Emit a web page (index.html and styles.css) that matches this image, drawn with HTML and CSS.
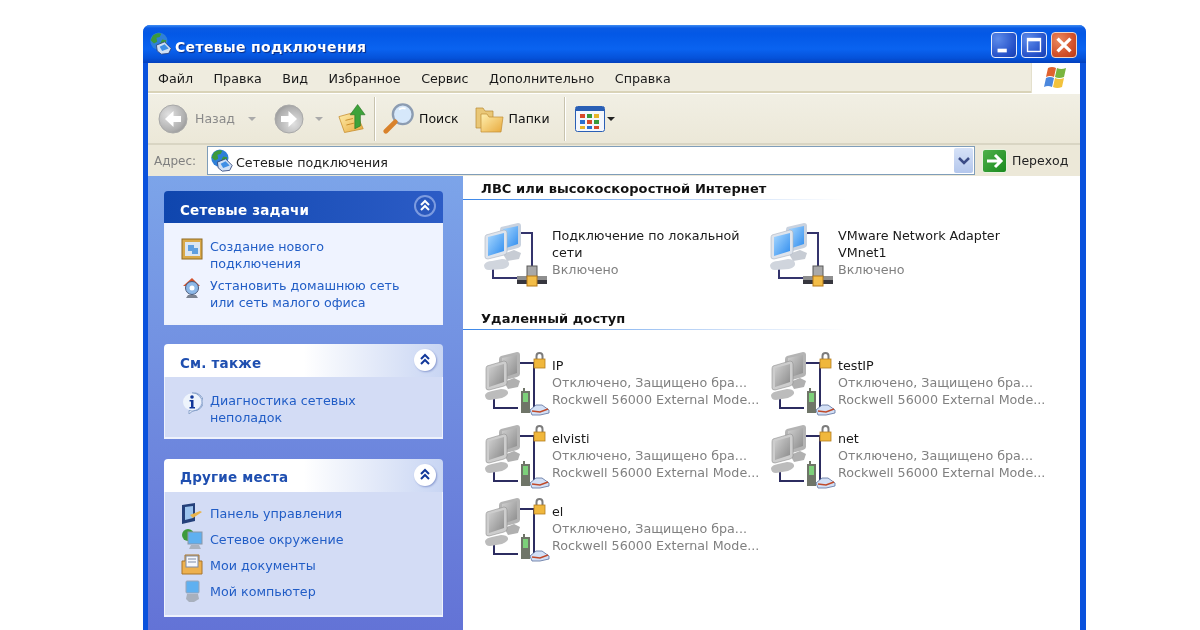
FILE: index.html
```html
<!DOCTYPE html>
<html lang="ru">
<head>
<meta charset="utf-8">
<title>Сетевые подключения</title>
<link rel="stylesheet" href="styles.css">
</head>
<body>
<svg class="defs" width="0" height="0" aria-hidden="true">
  <defs>
    <linearGradient id="scr" x1="0" y1="0" x2="1" y2="1"><stop offset="0" stop-color="#a8d8ff"/><stop offset="1" stop-color="#2f8cee"/></linearGradient>
    <linearGradient id="grayscr" x1="0" y1="0" x2="1" y2="1"><stop offset="0" stop-color="#d0d0d0"/><stop offset="1" stop-color="#8a8a8a"/></linearGradient>
    <radialGradient id="ball" cx=".35" cy=".35" r=".8"><stop offset="0" stop-color="#e2e2e2"/><stop offset=".7" stop-color="#b0b0b0"/><stop offset="1" stop-color="#8e8e8e"/></radialGradient>
    <linearGradient id="fold" x1="0" y1="0" x2="1" y2="1"><stop offset="0" stop-color="#fff0b0"/><stop offset="1" stop-color="#e8a93c"/></linearGradient>

    <symbol id="i-globe" viewBox="0 0 28 28">
      <circle cx="12" cy="11" r="10.500" fill="#2f7fd8"/>
      <path d="M5 4c4-3 8-3 10-2l-2 4-4 1 1 5-4 2-4-4zM16 9l5 1-1 5-4 2-2-4z" fill="#3c9a3c"/>
      <path d="M9 16l10-4 8 8-3 6-9 1-5-4z" fill="#cfe0f5" stroke="#2b3f77"/>
      <path d="M13 18l6-3 5 5-8 3z" fill="#3f8fe5"/>
    </symbol>
    <symbol id="i-lan" viewBox="0 0 64 64">
      <path d="M37 10H49V44M10 40V55H34" fill="none" stroke="#34346c" stroke-width="2"/>
      <path d="M18 4 35 0q3 0 3 3V22q0 2-3 3L20 29q-3 0-3-2V7q0-2 1-3z" fill="#c9d2df"/>
      <path d="M20 6 35 3V21L20 26z" fill="url(#scr)"/>
      <path d="M20 31 31 27 38 30 36 36 24 38z" fill="#c7ccd4"/>
      <path d="M3 12 21 7q3 0 3 3V29q0 2-3 3L5 36q-3 0-3-2V15q0-2 1-3z" fill="#dfe4ec" stroke="#a9b1bf" stroke-width=".6"/>
      <path d="M5 14 21 10V28L5 33z" fill="url(#scr)"/>
      <path d="M1 42q2-4 8-4l10-2q6 0 7 4t-6 6L6 47q-5 0-5-5z" fill="#d0d5dd"/>
      <rect x="34" y="53" width="30" height="8" fill="#8f8f8f"/>
      <rect x="34" y="57" width="30" height="4" fill="#36363e"/>
      <rect x="44" y="43" width="10" height="11" fill="#a9a9a9" stroke="#5a5a5a"/>
      <rect x="44" y="53" width="10" height="10" fill="#f3bd48" stroke="#b57a1a"/>
    </symbol>
    <symbol id="i-dial" viewBox="0 0 68 66">
      <path d="M35 12H50V56M10 42V57H34" fill="none" stroke="#2c2c60" stroke-width="2"/>
      <path d="M52.500 8V5a3 3 0 0 1 6 0V8" fill="none" stroke="#7c7c7c" stroke-width="2"/>
      <rect x="50" y="8" width="11" height="9" fill="#f0b73c" stroke="#b57e20" stroke-width=".8"/>
      <path d="M17 5 33 1q3 0 3 3V23q0 2-3 3L18 30q-3 0-3-2V8q0-2 2-3z" fill="#b4b4b4"/>
      <path d="M18 7 33 4V22L18 27z" fill="url(#grayscr)"/>
      <path d="M20 31 30 27 36 30 34 36 24 38z" fill="#b0b0b0"/>
      <path d="M3 15 20 10q3 0 3 3V32q0 2-3 3L5 39q-3 0-3-2V18q0-2 1-3z" fill="#cdcdcd" stroke="#8f8f8f" stroke-width=".6"/>
      <path d="M5 17 20 13V31L5 36z" fill="url(#grayscr)"/>
      <path d="M1 44q1-3 7-4l9-2q6 0 7 3t-6 6L6 49q-5 0-5-5z" fill="#bcbcbc"/>
      <path d="M39 37h2v3h5V62H37V40h2z" fill="#6f7568"/>
      <rect x="39" y="42" width="5" height="9" fill="#7dd07a"/>
      <path d="M46 59l6-5h6l7 5v3l-9 2H48z" fill="#d3e0f6" stroke="#5a6f9c" stroke-width=".8"/>
      <path d="M48 60l8 1 8-3" stroke="#c04a2a" stroke-width="1.500" fill="none"/>
    </symbol>
    <symbol id="i-circle" viewBox="0 0 30 30">
      <circle cx="15" cy="15" r="14" fill="url(#ball)" stroke="#a9a9a9"/>
      <path d="M23 12H15.500V7L7 15l8.500 8V18H23z" fill="#fff"/>
    </symbol>
    <symbol id="i-chev" viewBox="0 0 22 22">
      <path d="M7 10l4-4 4 4M7 15l4-4 4 4" fill="none" stroke="currentColor" stroke-width="2"/>
    </symbol>
  </defs>
</svg>

<div class="window">
  <header class="titlebar">
    <svg class="title-icon" width="23" height="23"><use href="#i-globe"/></svg>
    <span class="title-text">Сетевые подключения</span>
    <div class="controls">
      <span class="ctl ctl-blue"><svg width="24" height="24" viewBox="0 0 26 26"><rect x="6" y="17" width="10" height="4" fill="#fff"/></svg></span>
      <span class="ctl ctl-blue"><svg width="24" height="24" viewBox="0 0 26 26"><rect x="6" y="6" width="14" height="14" fill="none" stroke="#fff" stroke-width="1.500"/><rect x="6" y="6" width="14" height="3" fill="#fff"/></svg></span>
      <span class="ctl ctl-red"><svg width="24" height="24" viewBox="0 0 26 26"><path d="M6 6 20 20M20 6 6 20" stroke="#fff" stroke-width="3.500"/></svg></span>
    </div>
  </header>

  <nav class="menubar">
    <div class="menu-items">
      <span>Файл</span><span>Правка</span><span>Вид</span><span>Избранное</span><span>Сервис</span><span>Дополнительно</span><span>Справка</span>
    </div>
    <div class="flag">
      <svg width="26" height="26" viewBox="0 0 26 26">
        <path d="M5 3q4-2 8 0l-2 9q-4-2-8 0z" fill="#e0622e"/>
        <path d="M14 3q4 2 9 0l-2 9q-5 2-9 0z" fill="#79b53e"/>
        <path d="M3 13q4-2 8 0l-2 9q-4-2-8 0z" fill="#4b87dd"/>
        <path d="M12 13q4 2 9 0l-2 9q-5 2-9 0z" fill="#f2c23c"/>
      </svg>
    </div>
  </nav>

  <div class="toolbar">
    <svg class="tb-back" width="30" height="30"><use href="#i-circle"/></svg>
    <span class="tb-label tb-muted">Назад</span>
    <span class="caret caret-gray tb-c1"></span>
    <svg class="tb-fwd" width="30" height="30"><use href="#i-circle" transform="rotate(180 15 15)"/></svg>
    <span class="caret caret-gray tb-c2"></span>
    <svg class="tb-up" width="28" height="31" viewBox="0 0 30 32">
      <path d="M1 14 19 9 27 27 7 31z" fill="url(#fold)" stroke="#c58a28" stroke-width=".8"/>
      <path d="M8 18l8-2M9 23l8-2" stroke="#c58a28"/>
      <path d="M18 27V12H13L21 1l8 11H24V24z" fill="#3ea33a" stroke="#1f6d1f" stroke-width=".6"/>
    </svg>
    <span class="tb-sep"></span>
    <svg class="tb-search" width="32" height="34" viewBox="0 0 34 36">
      <circle cx="21" cy="13" r="10.500" fill="#d6e8fb" stroke="#8c9cb2" stroke-width="2.500"/>
      <path d="M17 8a7 7 0 0 1 7-1" stroke="#fff" stroke-width="2" fill="none"/>
      <path d="M13 21 3 31" stroke="#d9822b" stroke-width="5" stroke-linecap="round"/>
    </svg>
    <span class="tb-label tb-dark">Поиск</span>
    <svg class="tb-fold" width="30" height="30" viewBox="0 0 30 30">
      <path d="M1 4H8l2 3H18V24H1z" fill="#e9c777" stroke="#b98a30" stroke-width=".7"/>
      <path d="M6 10H12l2 3H28L26 28H6z" fill="url(#fold)" stroke="#c08d34" stroke-width=".7"/>
    </svg>
    <span class="tb-label tb-dark">Папки</span>
    <span class="tb-sep tb-sep2"></span>
    <svg class="tb-view" width="30" height="26" viewBox="0 0 30 26">
      <rect x=".5" y=".5" width="29" height="25" rx="2" fill="#f4f7fd" stroke="#2a5fb5"/>
      <rect x="1" y="1" width="28" height="4" fill="#2a5fb5"/>
      <rect x="5" y="8" width="5" height="4" fill="#d94a2a"/><rect x="12" y="8" width="5" height="4" fill="#3a9a3a"/><rect x="19" y="8" width="5" height="4" fill="#e7b52c"/>
      <rect x="5" y="14" width="5" height="4" fill="#2a6fd0"/><rect x="12" y="14" width="5" height="4" fill="#d94a2a"/><rect x="19" y="14" width="5" height="4" fill="#3a9a3a"/>
      <rect x="5" y="20" width="5" height="3" fill="#e7b52c"/><rect x="12" y="20" width="5" height="3" fill="#2a6fd0"/><rect x="19" y="20" width="5" height="3" fill="#d94a2a"/>
    </svg>
    <span class="caret caret-dark tb-c3"></span>
  </div>

  <div class="addressbar">
    <span class="addr-label">Адрес:</span>
    <div class="addr-field">
      <svg class="addr-icon" width="23" height="23"><use href="#i-globe"/></svg>
      <span class="addr-text">Сетевые подключения</span>
      <span class="addr-drop"><svg width="14" height="10" viewBox="0 0 14 10"><path d="M2 2l5 5 5-5" fill="none" stroke="#3b4c86" stroke-width="2.500"/></svg></span>
    </div>
    <span class="go-btn"><svg width="20" height="16" viewBox="0 0 20 16"><path d="M2 8H16M10 2l6 6-6 6" fill="none" stroke="#fff" stroke-width="3"/></svg></span>
    <span class="go-text">Переход</span>
  </div>

  <div class="content">
    <aside class="sidebar">
      <section class="card card-main">
        <div class="card-head">
          <span class="card-title">Сетевые задачи</span>
          <svg class="chev" width="22" height="22"><use href="#i-chev"/></svg>
        </div>
        <div class="card-body">
          <a class="task">
            <svg class="task-icon" width="22" height="22" viewBox="0 0 22 22"><rect x="1" y="1" width="20" height="20" fill="#d9a94a" stroke="#8f6a23"/><rect x="4" y="4" width="15" height="14" fill="#dbe6f3"/><path d="M7 7h6v6H7zM11 10h6v6h-6z" fill="#5f9fe0"/></svg>
            <span>Создание нового подключения</span>
          </a>
          <a class="task">
            <svg class="task-icon" width="22" height="22" viewBox="0 0 22 22"><path d="M2 9 11 1l8 8z" fill="#d3522d"/><circle cx="11" cy="11" r="6.500" fill="#8db8e8" stroke="#4a5a7a"/><circle cx="11" cy="11" r="2.500" fill="#fff"/><path d="M7 18h8l2 3H5z" fill="#7b8290"/></svg>
            <span>Установить домашнюю сеть или сеть малого офиса</span>
          </a>
        </div>
      </section>

      <section class="card">
        <div class="card-head">
          <span class="card-title">См. также</span>
          <svg class="chev" width="22" height="22"><use href="#i-chev"/></svg>
        </div>
        <div class="card-body">
          <a class="task">
            <svg class="task-icon" width="22" height="22" viewBox="0 0 22 22"><path d="M11 1a10 9 0 1 1-3 17.500L8 22l4-3.200A9.500 9 0 1 0 11 1z" fill="#eef4fc" stroke="#8aa4cc"/><ellipse cx="11" cy="10" rx="9" ry="8.500" fill="#eef4fc"/><circle cx="11" cy="5" r="1.800" fill="#12389a"/><path d="M8.500 8h4v7h1.500v1.500H8.500V15H10V9.500H8.500z" fill="#12389a"/></svg>
            <span>Диагностика сетевых неполадок</span>
          </a>
        </div>
      </section>

      <section class="card">
        <div class="card-head">
          <span class="card-title">Другие места</span>
          <svg class="chev" width="22" height="22"><use href="#i-chev"/></svg>
        </div>
        <div class="card-body card-body-list">
          <a class="place">
            <svg class="task-icon" width="22" height="22" viewBox="0 0 22 22"><path d="M1 3 14 1V19L1 22z" fill="#24407a"/><path d="M4 5 12 4V16L4 18z" fill="#9cc4ee"/><path d="M9 13l10-4 2 1-9 6z" fill="#e9b44c"/></svg>
            <span>Панель управления</span>
          </a>
          <a class="place">
            <svg class="task-icon" width="22" height="22" viewBox="0 0 22 22"><circle cx="7" cy="7" r="6" fill="#3c9a3c"/><rect x="7" y="4" width="14" height="12" fill="#5fb0f0" stroke="#8c97a8"/><path d="M10 17h8l2 4H8z" fill="#aab2bf"/></svg>
            <span>Сетевое окружение</span>
          </a>
          <a class="place">
            <svg class="task-icon" width="22" height="22" viewBox="0 0 22 22"><path d="M1 7H4V1H18V7H21V20H1z" fill="#edb14f" stroke="#a9742a"/><rect x="5" y="2" width="12" height="11" fill="#f6f8fc" stroke="#7c8ba8"/><path d="M7 5h8M7 8h8" stroke="#7c8ba8"/></svg>
            <span>Мои документы</span>
          </a>
          <a class="place">
            <svg class="task-icon" width="22" height="22" viewBox="0 0 22 22"><rect x="5" y="1" width="13" height="12" rx="1" fill="#5fb0f0" stroke="#9aa5b8"/><path d="M6 14h11l1 5-5 3H8L5 19z" fill="#a8b0bd"/></svg>
            <span>Мой компьютер</span>
          </a>
        </div>
      </section>
    </aside>

    <main class="listing">
      <h2 class="group-head">ЛВС или высокоскоростной Интернет</h2>
      <div class="group-grid group-lan">
        <div class="conn">
          <svg class="conn-icon" width="64" height="64"><use href="#i-lan"/></svg>
          <div class="conn-text"><span class="conn-name">Подключение по локальной сети</span><span class="conn-sub">Включено</span></div>
        </div>
        <div class="conn">
          <svg class="conn-icon" width="64" height="64"><use href="#i-lan"/></svg>
          <div class="conn-text"><span class="conn-name">VMware Network Adapter VMnet1</span><span class="conn-sub">Включено</span></div>
        </div>
      </div>
      <h2 class="group-head">Удаленный доступ</h2>
      <div class="group-grid group-dial">
        <div class="conn">
          <svg class="conn-icon" width="68" height="66"><use href="#i-dial"/></svg>
          <div class="conn-text"><span class="conn-name">IP</span><span class="conn-sub">Отключено, Защищено бра...</span><span class="conn-sub">Rockwell 56000 External Mode...</span></div>
        </div>
        <div class="conn">
          <svg class="conn-icon" width="68" height="66"><use href="#i-dial"/></svg>
          <div class="conn-text"><span class="conn-name">testIP</span><span class="conn-sub">Отключено, Защищено бра...</span><span class="conn-sub">Rockwell 56000 External Mode...</span></div>
        </div>
        <div class="conn">
          <svg class="conn-icon" width="68" height="66"><use href="#i-dial"/></svg>
          <div class="conn-text"><span class="conn-name">elvisti</span><span class="conn-sub">Отключено, Защищено бра...</span><span class="conn-sub">Rockwell 56000 External Mode...</span></div>
        </div>
        <div class="conn">
          <svg class="conn-icon" width="68" height="66"><use href="#i-dial"/></svg>
          <div class="conn-text"><span class="conn-name">net</span><span class="conn-sub">Отключено, Защищено бра...</span><span class="conn-sub">Rockwell 56000 External Mode...</span></div>
        </div>
        <div class="conn">
          <svg class="conn-icon" width="68" height="66"><use href="#i-dial"/></svg>
          <div class="conn-text"><span class="conn-name">el</span><span class="conn-sub">Отключено, Защищено бра...</span><span class="conn-sub">Rockwell 56000 External Mode...</span></div>
        </div>
      </div>
    </main>
  </div>
</div>
</body>
</html>
```
FILE: styles.css
```css
* { box-sizing: border-box; }
html, body { margin: 0; height: 630px; overflow: hidden; background: #fff; }
body { font-family: "DejaVu Sans", Verdana, sans-serif; font-size: 12.7px; color: #1a1a1a; }
.defs { display: block; height: 0; }

.window {
  margin: 25px 0 0 143px;
  width: 943px;
  height: 605px;
  display: flex;
  flex-direction: column;
  background: #0a52dd;
  border-radius: 7px 7px 0 0;
  padding: 0 6px 0 5px;
  filter: blur(0.35px);
}

.titlebar {
  height: 38px;
  flex: none;
  margin: 0 -6px 0 -5px;
  padding: 0 9px 0 6px;
  display: flex;
  align-items: center;
  border-radius: 7px 7px 0 0;
  background: linear-gradient(#3f8df3 0, #0a5be4 3px, #0358e6 9px, #0a63f0 24px, #0552da 33px, #0340bd 38px);
}
.title-icon { flex: none; margin-top: -1px; }
.title-text {
  margin: 6px 0 0 3px;
  color: #fff;
  font-weight: 700;
  font-size: 14px;
  letter-spacing: .35px;
  text-shadow: 1px 1px 1px #0a2a80;
}
.controls { margin-left: auto; display: flex; gap: 4px; margin-top: 1px; }
.ctl { width: 26px; height: 26px; border: 1px solid #e8eefc; border-radius: 4px; display: flex; }
.ctl-blue { background: radial-gradient(circle at 25% 25%, #5d8bea, #2450c8 70%, #1b3fae); }
.ctl-red { background: radial-gradient(circle at 30% 30%, #e98a60, #d3512a 60%, #b93a18); border-color: #f0d6c8; }

.menubar {
  height: 30px;
  display: flex;
  background: #efecdf;
  border-bottom: 2px solid #d9d3b8;
  flex: none;
}
.menu-items { display: flex; gap: 20.500px; padding: 2px 0 0 10px; align-items: center; flex: 1; }
.flag { width: 49px; background: #fff; display: flex; align-items: center; justify-content: center; border-left: 1px solid #e4e0cc; margin-bottom: -2px; }

.toolbar {
  height: 52px;
  flex: none;
  display: flex;
  align-items: center;
  background: linear-gradient(#f1efe4, #ece8d8);
  border-top: 1px solid #fff;
  border-bottom: 2px solid #d9d5c3;
  padding-left: 10px;
}
.tb-label { font-size: 12.500px; }
.tb-muted { color: #8a8a8a; margin-left: 7px; }
.tb-dark { color: #111; }
.caret { width: 0; height: 0; border-left: 4px solid transparent; border-right: 4px solid transparent; border-top: 4px solid #aaa; }
.caret-dark { border-top-color: #222; }
.tb-c1 { margin-left: 13px; }
.tb-fwd { margin-left: 18px; }
.tb-c2 { margin-left: 11px; }
.tb-up { margin-left: 15px; }
.tb-sep { width: 1px; height: 44px; background: #c8c3ae; margin-left: 8px; box-shadow: 1px 0 0 #fff; }
.tb-search { margin-left: 8px; margin-right: 4px; }
.tb-fold { margin-left: 16px; margin-right: 4px; }
.tb-sep2 { margin-left: 14px; }
.tb-view { margin-left: 10px; }
.tb-c3 { margin-left: 2px; }

.addressbar {
  height: 31px;
  flex: none;
  display: flex;
  align-items: center;
  background: #ece8d8;
  padding-left: 6px;
}
.addr-label { color: #7f7f7f; font-size: 12px; width: 53px; }
.addr-field {
  width: 768px;
  height: 29px;
  border: 1px solid #7f9db9;
  background: #fff;
  display: flex;
  align-items: center;
  padding-left: 2px;
}
.addr-text { margin: 3px 0 0 3px; color: #222; }
.addr-drop {
  margin-left: auto;
  margin-right: 1px;
  width: 19px;
  height: 25px;
  background: linear-gradient(#d6e2f8, #b4c7ec);
  border-radius: 2px;
  display: flex;
  align-items: center;
  justify-content: center;
}
.go-btn {
  margin-left: 7px;
  width: 25px;
  height: 24px;
  border-radius: 3px;
  border: 1px solid #e8f2e0;
  background: linear-gradient(135deg, #4fb04a, #1a8a1e);
  display: flex;
  align-items: center;
  justify-content: center;
}
.go-text { margin-left: 5px; font-size: 12.500px; color: #222; }

.content { flex: 1; display: flex; min-height: 0; background: #fff; }

.sidebar {
  width: 315px;
  flex: none;
  padding: 15px 0 0 16px;
  display: flex;
  flex-direction: column;
  gap: 19px;
  background: linear-gradient(#7ca4e9, #6373d6);
}
.card { width: 279px; flex: none; }
.card + .card + .card { margin-top: 1px; }
.card-head {
  height: 33px;
  padding: 0 7px 0 16px;
  display: flex;
  align-items: center;
  justify-content: space-between;
  border-radius: 4px 4px 0 0;
  background: linear-gradient(90deg, #fff 0, #fff 50%, #c8d5f3 100%);
}
.card-main .card-head { background: linear-gradient(90deg, #0f46ae, #2c5cc6); height: 32px; }
.card-title { font-weight: 700; font-size: 13.500px; letter-spacing: .2px; color: #1f4fb0; margin-top: 5px; }
.card + .card + .card .card-title { margin-top: 3px; }
.card-main .card-title { color: #fff; }
.chev { flex: none; margin-top: -2px; color: #12389a; background: #fff; border-radius: 50%; box-shadow: 1px 1px 2px #8a9bd0; }
.card-main .chev { color: #fff; background: #2a58bd; box-shadow: inset 0 0 0 2px #7c9be0; }
.card-body {
  padding: 15px 16px 11px;
  display: flex;
  flex-direction: column;
  gap: 5px;
  background: #d3dcf5;
  border: solid #eef2fc;
  border-width: 0 1px 2px 1px;
}
.card-main .card-body { background: #eff3ff; padding-bottom: 12px; }
.card-body-list { padding: 8px 16px 11px; gap: 0; }
.task, .place { display: flex; gap: 7px; color: #215dc6; line-height: 17px; }
.task span { max-width: 200px; }
.place { height: 26px; align-items: center; }
.task-icon { flex: none; }

.listing { flex: 1; min-width: 0; padding: 5px 0 0 18px; }
.group-head {
  margin: 0;
  height: 19px;
  width: 365px;
  font-size: 13px;
  line-height: 16px;
  font-weight: 700;
  letter-spacing: .08px;
  color: #111;
  position: relative;
}
.group-head::after {
  content: "";
  position: absolute;
  left: -18px;
  right: 0;
  bottom: 0;
  height: 1px;
  background: linear-gradient(90deg, #3a86e8, #cfe0f8 70%, #fff);
}
.group-grid { display: grid; grid-template-columns: 286px 286px; }
.group-lan { padding: 23px 0 24px 0; }
.group-dial { grid-auto-rows: 73px; padding-top: 21px; }
.conn { display: flex; gap: 4px; }
.conn-icon { flex: none; margin-left: 3px; }
.group-lan .conn-icon { margin-left: 2px; margin-right: 1px; }
.group-dial .conn { gap: 0; }
.conn-text { display: flex; flex-direction: column; line-height: 17px; width: 212px; padding-top: 6px; }
.group-lan .conn-text { padding-top: 4px; }
.conn-name { color: #1a1a1a; }
.conn-sub { color: #808080; white-space: nowrap; }
```
